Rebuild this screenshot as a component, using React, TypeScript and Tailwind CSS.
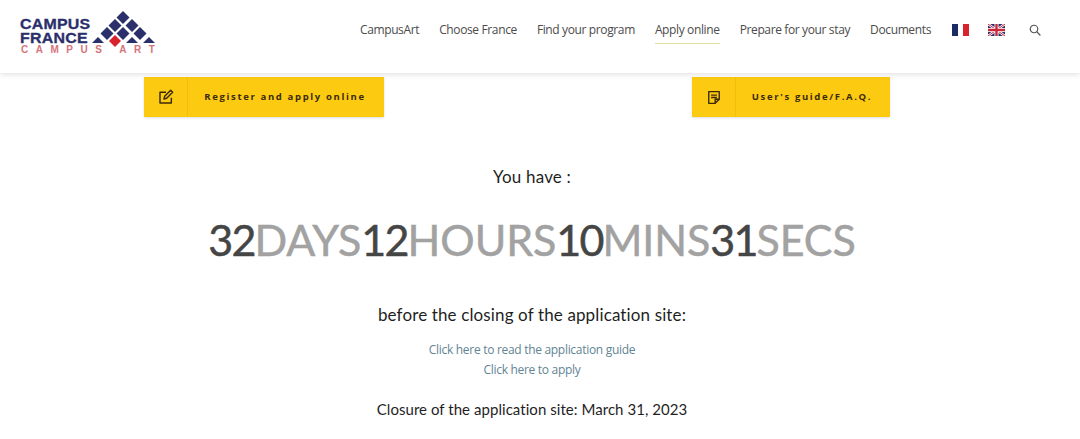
import React from "react";

const navItems = ["CampusArt", "Choose France", "Find your program", "Apply online", "Prepare for your stay", "Documents"];

const Logo = () => (
  <div className="relative w-[140px] h-[40px] font-['Liberation_Sans',sans-serif] font-bold">
    <div className="text-[#2b2f6b] text-[14.5px] leading-[14px] tracking-[0.2px] scale-x-110 origin-left [-webkit-text-stroke:0.3px_#2b2f6b]">
      <div>CAMPUS</div>
      <div>FRANCE</div>
    </div>
    <div className="text-[#d4747c] text-[10px] leading-[10px] mt-[0px] ml-[1px] tracking-[7.5px] whitespace-nowrap">CAMPUS ART</div>
    {/* Diamond pyramid */}
    <svg className="absolute left-[72px] top-[-6px]" width="68" height="44" viewBox="0 0 68 44" fill="#2b2f6b">
      <path d="M31 0l6.5 6.5L31 13l-6.5-6.5z" />
      <path d="M23 8l6.5 6.5L23 21l-6.5-6.5z" />
      <path d="M40 8l6.5 6.5L40 21l-6.5-6.5z" />
      <path d="M15 16l6.5 6.5L15 29l-6.5-6.5z" />
      <path d="M31 16l6.5 6.5L31 29l-6.5-6.5z" />
      <path d="M48 16l6.5 6.5L48 29l-6.5-6.5z" />
      <path d="M6 26l6 6H0z" />
      <path d="M40 26l6 6H34z" />
      <path d="M57 26l6 6H51z" />
      <path d="M23 24l6 6-6 6-6-6z" fill="#d8232f" />
    </svg>
  </div>
);

const Flag = ({ uk }: { uk?: boolean }) =>
  uk ? (
    <svg width="17" height="12" viewBox="0 0 17 12" className="block">
      <rect width="17" height="12" fill="#2b2f6b" />
      <path d="M0 0l17 12M17 0L0 12" stroke="#fff" strokeWidth="2.4" />
      <path d="M0 0l17 12M17 0L0 12" stroke="#c8283c" strokeWidth="1" />
      <path d="M8.5 0v12M0 6h17" stroke="#fff" strokeWidth="4" />
      <path d="M8.5 0v12M0 6h17" stroke="#c8283c" strokeWidth="2.4" />
    </svg>
  ) : (
    <div className="flex w-[17px] h-[12px]">
      <div className="flex-1 bg-[#1c2a66]" />
      <div className="flex-1 bg-white" />
      <div className="flex-1 bg-[#d8232f]" />
    </div>
  );

const YellowButton = ({ label, width, icon }: { label: string; width: string; icon: React.ReactNode }) => (
  <a href="#" className={`flex h-[40px] items-center bg-[#fdca12] text-[#3b2a08] shadow-sm ${width}`}>
    <span className="flex h-full w-[44px] shrink-0 items-center justify-center border-r border-[#f2bd0c]">{icon}</span>
    <span className="flex-1 pr-[2px] text-center font-['Open_Sans',sans-serif] text-[9.5px] font-bold tracking-[1.65px] whitespace-nowrap">
      {label}
    </span>
  </a>
);

const Count = ({ n, unit }: { n: string; unit: string }) => (
  <>
    <span className="text-[#454545] tracking-[-1.8px]">{n}</span>
    <span className="text-[#a2a2a2] tracking-[-0.1px]">{unit}</span>
  </>
);

export default function App() {
  return (
    <div className="w-[1080px] h-[439px] overflow-hidden bg-white font-['Open_Sans',sans-serif]">
      <header className="flex h-[73px] items-center bg-white pl-[20px] pr-[39px] shadow-[0_1px_6px_rgba(0,0,0,0.14)] relative">
        <Logo />
        <nav className="ml-auto flex items-center text-[12px] tracking-[-0.37px] text-[#4b4b4b] mt-[-14px]">
          {navItems.map((item) => (
            <a
              key={item}
              href="#"
              className={`mr-[20px] pb-[4px] pt-[5px] border-b ${item === "Apply online" ? "border-[#e3dc9b]" : "border-transparent"}`}
            >
              {item}
            </a>
          ))}
          <span className="ml-[1px] mr-[19px]"><Flag /></span>
          <span className="mr-[24px]"><Flag uk /></span>
          <svg width="12" height="12" viewBox="0 0 24 24" fill="none" stroke="#555" strokeWidth="2.4" strokeLinecap="round">
            <circle cx="10" cy="10" r="7.5" />
            <path d="M16 16l6 6" />
          </svg>
        </nav>
      </header>

      <div className="flex pt-[4px] pl-[144px]">
        <YellowButton
          label="Register and apply online"
          width="w-[240px]"
          icon={
            <svg width="16" height="16" viewBox="0 0 24 24" fill="none" stroke="#3b2a08" strokeWidth="2.2" strokeLinejoin="round">
              <path d="M20 13v8H3V5h9" />
              <path d="M9 15l1-4L19 2l3 3-9 9z" />
            </svg>
          }
        />
        <div className="ml-[308px]">
          <YellowButton
            label="User's guide/F.A.Q."
            width="w-[198px]"
            icon={
              <svg width="14" height="15" viewBox="0 0 24 24" fill="none" stroke="#3b2a08" strokeWidth="2.4" strokeLinejoin="round">
                <path d="M3 2h18v13l-7 7H3z" />
                <path d="M7 8h10M7 12h10M14 22v-7h7" />
              </svg>
            }
          />
        </div>
      </div>

      <main className="flex flex-col items-center w-[1064px] font-['Lato',sans-serif] text-[#1f1f1f]">
        <p className="mt-[49px] text-[17px] leading-[22px] tracking-[0.2px]">You have :</p>
        <div className="mt-[24px] text-[43px] leading-[56px] whitespace-nowrap [-webkit-text-stroke:0.5px]">
          <Count n="32" unit="DAYS" />
          <Count n="12" unit="HOURS" />
          <Count n="10" unit="MINS" />
          <Count n="31" unit="SECS" />
        </div>
        <p className="mt-[36px] text-[17px] leading-[22px] tracking-[0.13px]">before the closing of the application site:</p>
        <div className="mt-[14px] flex flex-col items-center font-['Open_Sans',sans-serif] text-[12px] leading-[20px] tracking-[-0.3px] text-[#5f8493]">
          <a href="#">Click here to read the application guide</a>
          <a href="#">Click here to apply</a>
        </div>
        <p className="mt-[18px] text-[15px] leading-[22px] tracking-[0.05px]">Closure of the application site: March 31, 2023</p>
      </main>
    </div>
  );
}
